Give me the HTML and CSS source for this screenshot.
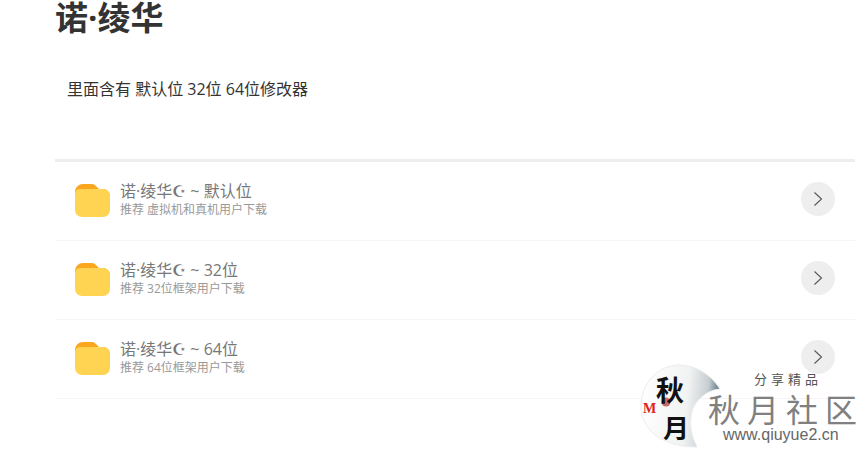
FILE: index.html
```html
<!DOCTYPE html>
<html lang="zh-CN">
<head>
  <meta charset="UTF-8">
  <title>诺·绫华</title>
  <link rel="stylesheet" href="styles.css">
</head>
<body>

<div class="container">
  <h1>诺·绫华</h1>
  <p class="intro">里面含有 默认位 32位 64位修改器</p>

  <ul class="file-list">
    <li class="file-row">
      <svg class="folder" viewBox="0 0 35 33" width="35" height="33"><path d="M0 8a8 8 0 0 1 8-8h9c2 0 3 1 4.500 2.500L24 5h4a7 7 0 0 1 7 7v6H0z" fill="#fba61f"/><path d="M0 10a5 5 0 0 1 5-5h23a7 7 0 0 1 7 7v14a7 7 0 0 1-7 7H7a7 7 0 0 1-7-7z" fill="#ffd452"/></svg>
      <div class="file-text">
        <div class="file-name">诺·绫华☪ ~ 默认位</div>
        <div class="file-desc">推荐 虚拟机和真机用户下载</div>
      </div>
      <span class="go"><svg viewBox="0 0 12 16" width="12" height="16"><path d="M2.500 1.500 9.500 8l-7 6.500" fill="none" stroke="#555" stroke-width="1.100"/></svg></span>
    </li>
    <li class="file-row">
      <svg class="folder" viewBox="0 0 35 33" width="35" height="33"><path d="M0 8a8 8 0 0 1 8-8h9c2 0 3 1 4.500 2.500L24 5h4a7 7 0 0 1 7 7v6H0z" fill="#fba61f"/><path d="M0 10a5 5 0 0 1 5-5h23a7 7 0 0 1 7 7v14a7 7 0 0 1-7 7H7a7 7 0 0 1-7-7z" fill="#ffd452"/></svg>
      <div class="file-text">
        <div class="file-name">诺·绫华☪ ~ 32位</div>
        <div class="file-desc">推荐 32位框架用户下载</div>
      </div>
      <span class="go"><svg viewBox="0 0 12 16" width="12" height="16"><path d="M2.500 1.500 9.500 8l-7 6.500" fill="none" stroke="#555" stroke-width="1.100"/></svg></span>
    </li>
    <li class="file-row">
      <svg class="folder" viewBox="0 0 35 33" width="35" height="33"><path d="M0 8a8 8 0 0 1 8-8h9c2 0 3 1 4.500 2.500L24 5h4a7 7 0 0 1 7 7v6H0z" fill="#fba61f"/><path d="M0 10a5 5 0 0 1 5-5h23a7 7 0 0 1 7 7v14a7 7 0 0 1-7 7H7a7 7 0 0 1-7-7z" fill="#ffd452"/></svg>
      <div class="file-text">
        <div class="file-name">诺·绫华☪ ~ 64位</div>
        <div class="file-desc">推荐 64位框架用户下载</div>
      </div>
      <span class="go"><svg viewBox="0 0 12 16" width="12" height="16"><path d="M2.500 1.500 9.500 8l-7 6.500" fill="none" stroke="#555" stroke-width="1.100"/></svg></span>
    </li>
  </ul>
</div>

<!-- watermark sits over the page -->
<div class="watermark">
  <svg class="moon" viewBox="0 0 84 84" width="84" height="84">
    <defs>
      <linearGradient id="rim" x1="0" y1="0.200" x2="1" y2="0.300">
        <stop offset="0" stop-color="#ffffff"/>
        <stop offset="0.600" stop-color="#f1f2f2"/>
        <stop offset="0.850" stop-color="#c6ced2"/>
        <stop offset="1" stop-color="#5b7384"/>
      </linearGradient>
    </defs>
    <path d="M80 25C70 9 54 1 38 1 16 2 1 21 1 42c0 23 20 41 56 41-6-12-8-22-5-36 3-10 14-21 28-22z" fill="url(#rim)" stroke="#ececec"/>
    <circle cx="26" cy="38" r="4.500" fill="#c96a6a"/>
  </svg>
  <span class="moon-top">秋</span>
  <span class="moon-bottom">月</span>
  <span class="moon-m">M</span>
  <span class="tagline">分享精品</span>
  <span class="brand">秋月社区</span>
  <span class="url">www.qiuyue2.cn</span>
</div>

</body>
</html>
```

FILE: styles.css
```css
body {
  margin: 0;
  background: #fff;
  font-family: "Open Sans", "Noto Sans CJK SC", sans-serif;
  color: #333;
  height: 454px;
  overflow: hidden;
  position: relative;
}
.container {
  margin: 0 10px 0 55px;
}
h1 {
  margin: 0;
  font-size: 33px;
  line-height: 36px;
  height: 36px;
  font-weight: 700;
  color: #333;
}
.intro {
  margin: 0;
  padding: 42px 12px 0;
  font-size: 16px;
  line-height: 22px;
  height: 81px;
  color: #333;
}
.file-list {
  list-style: none;
  margin: 0;
  padding: 0;
  border-top: 3px solid #eee;
}
.file-row {
  display: flex;
  align-items: center;
  height: 77px;
  padding: 0 20px 1px;
  border-bottom: 1px solid #f5f5f5;
}
.folder {
  flex-shrink: 0;
}
.file-text {
  flex: 1;
  margin-left: 10px;
  margin-top: -2px;
}
.file-name {
  font-size: 16px;
  line-height: 20px;
  color: #777;
}
.file-desc {
  font-size: 12px;
  line-height: 17px;
  color: #999;
}
.go {
  display: flex;
  align-items: center;
  justify-content: center;
  width: 34px;
  height: 34px;
  margin-bottom: 3px;
  border-radius: 50%;
  background: #eee;
}
.watermark {
  position: absolute;
  left: 640px;
  top: 364px;
  width: 225px;
  height: 90px;
}
.moon {
  position: absolute;
  left: 0;
  top: 0;
}
.moon-top,
.moon-bottom {
  position: absolute;
  line-height: 34px;
  color: #111;
  font-weight: 700;
}
.moon-top {
  left: 16px;
  top: 9px;
  font-size: 28px;
}
.moon-bottom {
  left: 23px;
  top: 47px;
  font-size: 26px;
}
.moon-m {
  position: absolute;
  left: 3px;
  top: 38px;
  font: 700 14px/14px "Liberation Serif", serif;
  color: #e02020;
}
.tagline {
  position: absolute;
  left: 114px;
  top: 6px;
  font-size: 13px;
  letter-spacing: 4px;
  line-height: 18px;
  color: #555;
}
.brand {
  position: absolute;
  left: 68px;
  top: 25px;
  font-size: 32px;
  line-height: 42px;
  letter-spacing: 7px;
  color: #808080;
  white-space: nowrap;
}
.url {
  position: absolute;
  left: 83px;
  top: 62px;
  font: 16px/18px "Liberation Sans", sans-serif;
  color: #666;
}
```
